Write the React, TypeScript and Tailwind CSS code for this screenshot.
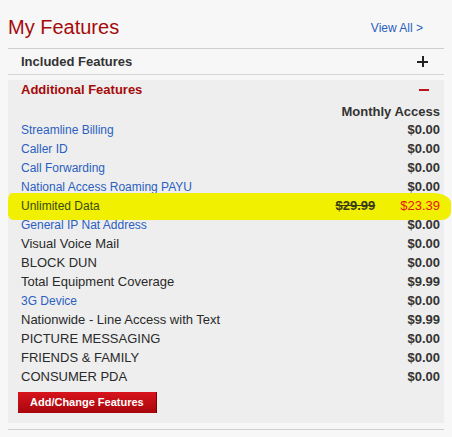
import React from 'react'

type Row = { name: string; price: string; link?: boolean }

const rows: Row[] = [
  { name: 'Streamline Billing', price: '$0.00', link: true },
  { name: 'Caller ID', price: '$0.00', link: true },
  { name: 'Call Forwarding', price: '$0.00', link: true },
  { name: 'National Access Roaming PAYU', price: '$0.00', link: true },
  { name: 'Unlimited Data', price: '', link: true },
  { name: 'General IP Nat Address', price: '$0.00', link: true },
  { name: 'Visual Voice Mail', price: '$0.00' },
  { name: 'BLOCK DUN', price: '$0.00' },
  { name: 'Total Equipment Coverage', price: '$9.99' },
  { name: '3G Device', price: '$0.00', link: true },
  { name: 'Nationwide - Line Access with Text', price: '$9.99' },
  { name: 'PICTURE MESSAGING', price: '$0.00' },
  { name: 'FRIENDS & FAMILY', price: '$0.00' },
  { name: 'CONSUMER PDA', price: '$0.00' },
]

export default function App() {
  return (
    <div className="w-[452px] h-[437px] bg-[#f7f7f7] px-2 font-['Liberation_Sans',Arial,sans-serif] overflow-hidden">
      {/* Header */}
      <div className="flex items-end justify-between h-[49px] pb-[11px] border-b border-[#cfcfcf]">
        <h1 className="text-[20px] leading-none text-[#a50a0a]">My Features</h1>
        <a className="text-[12px] leading-none text-[#2b5fc0] mr-[21px] mb-[3px]">View All &gt;</a>
      </div>

      {/* Included */}
      <div className="flex items-center justify-between h-[26px] pl-[13px] pr-[16px] border-b border-[#d5d5d5]">
        <span className="text-[13px] font-bold text-[#333]">Included Features</span>
        <span className="relative w-[11px] h-[11px]">
          <span className="absolute left-0 top-[4.5px] w-[11px] h-[2px] bg-[#222]" />
          <span className="absolute left-[4.5px] top-0 w-[2px] h-[11px] bg-[#222]" />
        </span>
      </div>

      {/* Additional */}
      <div className="mt-[5px] bg-[#eeeeee] pb-[10px]">
        <div className="flex items-center justify-between h-[19px] pl-[13px] pr-[15px]">
          <span className="text-[13px] font-bold text-[#a50a0a]">Additional Features</span>
          <span className="w-[10px] h-[2px] bg-[#c0121a]" />
        </div>
        <div className="flex justify-end items-end h-[21px] pr-[4px]">
          <span className="text-[13px] font-bold text-[#333] leading-none mb-[2px]">Monthly Access</span>
        </div>
        <div className="pl-[13px] pr-[4px]">
          {rows.map((r) =>
            r.name === 'Unlimited Data' ? (
              <div key={r.name} className="relative flex items-center justify-between h-[19px] text-[12px]">
                {/* marker highlight */}
                <span className="absolute -left-[13px] -right-[11px] -top-[3px] -bottom-[5px] bg-[#f0f000] rounded-[4px_18px_10px_6px/8px_10px_8px_6px]" />
                <span className="relative text-[#3a4a10]">{r.name}</span>
                <span className="relative flex items-center gap-[25px] text-[13px]">
                  <span className="font-bold text-[#3a3a10] line-through">$29.99</span>
                  <span className="text-[#e8121a]">$23.39</span>
                </span>
              </div>
            ) : (
              <div key={r.name} className="flex items-center justify-between h-[19px]">
                <span className={r.link ? 'text-[12px] text-[#2b5fc0]' : 'text-[13px] text-[#2a2a2a]'}>{r.name}</span>
                <span className="text-[13px] font-bold text-[#333]">{r.price}</span>
              </div>
            )
          )}
        </div>
        <button className="mt-[6px] ml-[10px] w-[139px] h-[21px] pl-[12px] text-left text-[11px] font-bold text-white bg-gradient-to-b from-[#d8141c] to-[#a8060c] border-r border-[#7a0006]">
          Add/Change Features
        </button>
      </div>
      <div className="mt-[6px] border-b border-[#cfcfcf]" />
    </div>
  )
}
